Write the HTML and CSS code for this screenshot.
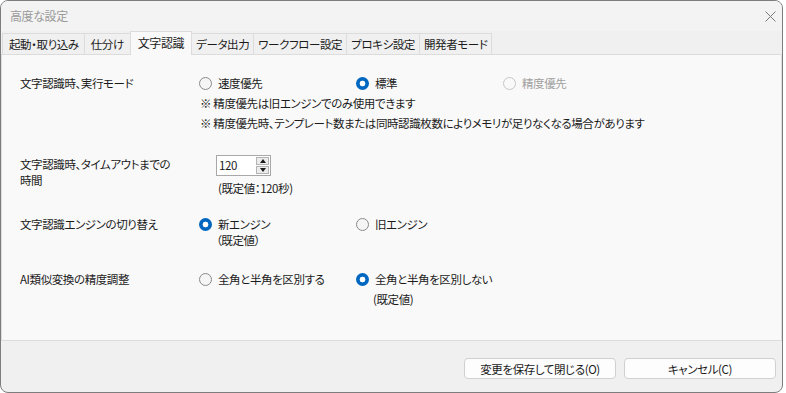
FILE: index.html
```html
<!DOCTYPE html>
<html lang="ja">

<head>
  <meta charset="UTF-8">
  <meta name="viewport" content="width=device-width, initial-scale=1.0">
  <title>高度な設定</title>
  <link rel="stylesheet" href="styles.css">
</head>

<body>
  <div class="window">
    <div class="titlebar">
      <span class="title">高度な設定</span>
      <svg class="close" width="11" height="11" viewBox="0 0 11 11">
        <path d="M0.5 0.5 L10.5 10.5 M10.5 0.5 L0.5 10.5" stroke="#7a7a7a" stroke-width="1" fill="none" />
      </svg>
    </div>

    <div class="tabs">
      <div class="tab">起動・取り込み</div>
      <div class="tab">仕分け</div>
      <div class="tab active">文字認識</div>
      <div class="tab">データ出力</div>
      <div class="tab">ワークフロー設定</div>
      <div class="tab">プロキシ設定</div>
      <div class="tab">開発者モード</div>
    </div>

    <div class="panel">
      <!-- 実行モード -->
      <div class="row row-mode">
        <div class="label">文字認識時、実行モード</div>
        <div class="field">
          <div class="options">
            <label class="radio"><span class="dot"></span>速度優先</label>
            <label class="radio"><span class="dot checked"></span>標準</label>
            <label class="radio disabled"><span class="dot"></span>精度優先</label>
          </div>
          <p class="note">※ 精度優先は旧エンジンでのみ使用できます</p>
          <p class="note">※ 精度優先時、テンプレート数または同時認識枚数によりメモリが足りなくなる場合があります</p>
        </div>
      </div>

      <!-- タイムアウト -->
      <div class="row row-timeout">
        <div class="label">文字認識時、タイムアウトまでの<br>時間</div>
        <div class="field">
          <div class="spinner">
            <span class="spinner-value">120</span>
            <div class="spinner-buttons">
              <span class="spin up"></span>
              <span class="spin down"></span>
            </div>
          </div>
          <p class="hint">(既定値：120秒)</p>
        </div>
      </div>

      <!-- エンジン切り替え -->
      <div class="row row-engine">
        <div class="label">文字認識エンジンの切り替え</div>
        <div class="field">
          <div class="options">
            <label class="radio"><span class="dot checked"></span>新エンジン</label>
            <label class="radio"><span class="dot"></span>旧エンジン</label>
          </div>
          <p class="sub">（既定値）</p>
        </div>
      </div>

      <!-- AI類似変換 -->
      <div class="row row-ai">
        <div class="label">AI類似変換の精度調整</div>
        <div class="field">
          <div class="options">
            <label class="radio"><span class="dot"></span>全角と半角を区別する</label>
            <label class="radio"><span class="dot checked"></span>全角と半角を区別しない</label>
          </div>
          <p class="sub sub-right">(既定値)</p>
        </div>
      </div>
    </div>

    <div class="footer">
      <button class="btn">変更を保存して閉じる(O)</button>
      <button class="btn">キャンセル(C)</button>
    </div>
  </div>
</body>

</html>
```

FILE: styles.css
```css
body {
  margin: 0;
  background-color: #ffffff;
  font-family: "Noto Sans CJK JP", "Noto Sans", sans-serif;
  font-size: 11.5px;
  letter-spacing: -0.4px;
  color: #1b1b1b;
  font-feature-settings: "palt";
}

.window {
  width: 781px;
  height: 391px;
  border: 1px solid #7d7d7d;
  border-radius: 8px;
  background-color: #f0f0f0;
  overflow: hidden;
  display: flex;
  flex-direction: column;
}

.titlebar {
  height: 30px;
  display: flex;
  align-items: center;
  justify-content: space-between;
  padding: 0 6px 0 9px;
  background-color: #f3f3f3;
}

.title {
  color: #9a9a9a;
  line-height: 16px;
  font-size: 12px;
}

.tabs {
  height: 23px;
  display: flex;
  align-items: flex-end;
  padding-left: 1px;
  position: relative;
  z-index: 1;
}

.tab {
  min-width: 37px;
  height: 20px;
  line-height: 20px;
  padding: 0 4px;
  text-align: center;
  background-color: #f0f0f0;
  border: 1px solid #dcdcdc;
  border-bottom: none;
  margin-right: -1px;
  white-space: nowrap;
}

.tab:first-child {
  padding: 0 5px 0 6px;
}

.tab.active {
  height: 23px;
  line-height: 22px;
  background-color: #f9f9f9;
  margin-bottom: -1px;
  padding: 0 7px;
  font-size: 12px;
}

.panel {
  height: 267px;
  border: 1px solid #dcdcdc;
  background-color: #f9f9f9;
  padding: 18px 0 0 18px;
}

.row {
  display: flex;
}

.label {
  width: 179px;
  flex-shrink: 0;
  line-height: 20px;
}

.field p {
  margin: 0;
}

.options {
  display: grid;
  grid-template-columns: 157px 147px auto;
  height: 20px;
  align-items: center;
}

.radio {
  display: flex;
  align-items: center;
  gap: 6px;
  white-space: nowrap;
}

.radio.disabled {
  color: #a0a0a0;
}

.dot {
  width: 11px;
  height: 11px;
  border: 1px solid #8a8a8a;
  border-radius: 50%;
  background-color: #f5f5f5;
  flex-shrink: 0;
}

.disabled .dot {
  border-color: #c6c6c6;
  background-color: #f9f9f9;
}

.dot.checked {
  width: 13px;
  height: 13px;
  border: none;
  background: radial-gradient(circle, #ffffff 0 2.6px, #0067c0 3.2px);
}

.note {
  line-height: 20px;
  padding-left: 1px;
}

/* timeout */
.row-timeout {
  margin-top: 22px;
}

.row-timeout .label {
  line-height: 16px;
  padding-top: 1px;
}

.row-timeout .field {
  padding-left: 17px;
}

.spinner {
  width: 53px;
  height: 19px;
  border: 1px solid #a8a8a8;
  background-color: #ffffff;
  display: flex;
  justify-content: space-between;
}

.spinner-value {
  line-height: 19px;
  padding-left: 2px;
}

.spinner-buttons {
  width: 13px;
  display: flex;
  flex-direction: column;
  gap: 1px;
  padding: 1px 1px 1px 0;
}

.spin {
  flex: 1;
  background-color: #ececec;
  border: 1px solid #b4b4b4;
  display: flex;
  align-items: center;
  justify-content: center;
}

.spin::after {
  content: "";
  border-left: 3px solid transparent;
  border-right: 3px solid transparent;
}

.spin.up::after {
  border-bottom: 4px solid #1b1b1b;
}

.spin.down::after {
  border-top: 4px solid #1b1b1b;
}

.hint {
  line-height: 18px;
  margin-top: 3px !important;
  padding-left: 2px;
}

/* engine */
.row-engine {
  margin-top: 18px;
}

.row-engine .label {
  line-height: 18px;
}

.row-engine .options {
  height: 18px;
}

.sub {
  line-height: 14px;
  padding-left: 17px;
}

/* AI */
.row-ai {
  margin-top: 22px;
}

.row-ai .sub {
  line-height: 20px;
}

.sub-right {
  padding-left: 174px !important;
}

.footer {
  flex: 1;
  display: flex;
  justify-content: flex-end;
  align-items: flex-start;
  gap: 8px;
  padding: 17px 6px 0 0;
}

.btn {
  width: 152px;
  height: 21px;
  border: 1px solid #d0d0d0;
  border-radius: 4px;
  background-color: #fdfdfd;
  font-family: inherit;
  font-size: 11.5px;
  letter-spacing: -0.4px;
  font-feature-settings: "palt";
  color: #1b1b1b;
  padding: 0;
}
```
